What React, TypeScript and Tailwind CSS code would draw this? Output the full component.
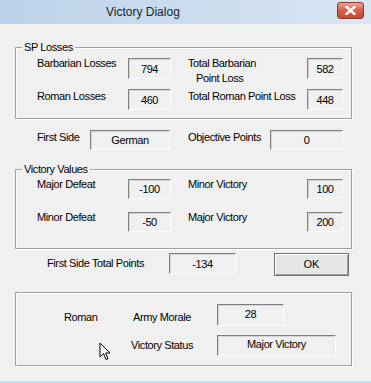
import React from 'react'

// sunken read-only edit field, classic win32 look
function Field({ value, className }: { value: string; className: string }) {
  return (
    <div
      className={`flex items-center justify-center border border-t-[#808080] border-l-[#808080] border-b-[#fcfcfc] border-r-[#fcfcfc] shadow-[inset_1px_1px_0_#d4d4d4] bg-[#f0f0f0] ${className}`}
    >
      <span className="pt-[1px]">{value}</span>
    </div>
  )
}

function Group({ label, className, children }: { label?: string; className: string; children: React.ReactNode }) {
  return (
    <div className={`relative w-[337px] border border-[#a0a0a0] shadow-[inset_1px_1px_0_#fff,1px_1px_0_#fff] ${className}`}>
      {label && (
        <span className="absolute -top-[8px] left-[6px] bg-[#f0f0f0] px-[2px] leading-[14px]">{label}</span>
      )}
      {children}
    </div>
  )
}

function Cursor() {
  return (
    <svg className="absolute left-[99px] top-[342px]" width="13" height="20" viewBox="0 0 13 20">
      <path
        d="M1 1 L1 15 L4.5 11.5 L7 17.5 L9 16.7 L6.6 11 L11 11 Z"
        fill="#fff"
        stroke="#000"
        strokeWidth="1"
        strokeLinejoin="miter"
      />
    </svg>
  )
}

export default function App() {
  return (
    <div className="relative w-[371px] h-[383px] bg-[#f0f0f0] flex flex-col font-['Liberation_Sans',Arial,sans-serif] text-[11px] tracking-[-0.4px] text-black leading-[13px] overflow-hidden">
      {/* title bar */}
      <div className="h-[24px] shrink-0 flex items-center bg-gradient-to-r from-[#bcd2ea] to-[#d9e6f3]">
        <span className="ml-[106px] text-[12px] tracking-normal text-[#1e1e1e] pt-[1px]">Victory Dialog</span>
        <div className="ml-auto mr-[7px] mb-[3px] w-[27px] h-[17px] rounded-[3px] border border-[#8a3a2e] bg-gradient-to-b from-[#e8a595] via-[#d4604a] to-[#c44a34] flex items-center justify-center">
          <svg width="11" height="9" viewBox="0 0 11 9">
            <path d="M1.5 1 L9.5 8 M9.5 1 L1.5 8" stroke="#fff" strokeWidth="2.4" strokeLinecap="square" />
          </svg>
        </div>
      </div>

      <div className="flex-1 pl-[15px] flex flex-col">
        {/* SP Losses */}
        <Group label="SP Losses" className="mt-[23px] h-[72px]">
          <div className="flex pl-[21px] pt-[10px] h-[31px]">
            <span className="w-[91px] mt-[-1px]">Barbarian Losses</span>
            <Field value="794" className="w-[43px] h-[21px]" />
            <div className="ml-[17px] w-[119px] mt-[-2px] flex flex-col leading-[15px]">
              <span>Total Barbarian</span>
              <span className="pl-[8px]">Point Loss</span>
            </div>
            <Field value="582" className="w-[36px] h-[21px]" />
          </div>
          <div className="flex pl-[21px] pt-[10px]">
            <span className="w-[91px] mt-[1px]">Roman Losses</span>
            <Field value="460" className="w-[43px] h-[21px]" />
            <span className="ml-[17px] w-[119px] mt-[1px]">Total Roman Point Loss</span>
            <Field value="448" className="w-[36px] h-[21px]" />
          </div>
        </Group>

        {/* first side row */}
        <div className="flex pl-[22px] mt-[11px] h-[20px]">
          <span className="w-[53px] mt-[1px]">First Side</span>
          <Field value="German" className="w-[80px] h-[20px]" />
          <span className="ml-[18px] w-[82px] mt-[1px]">Objective Points</span>
          <Field value="0" className="w-[73px] h-[20px]" />
        </div>

        {/* Victory Values */}
        <Group label="Victory Values" className="mt-[19px] h-[80px]">
          <div className="flex pl-[21px] pt-[9px]">
            <span className="w-[91px] mt-[-1px]">Major Defeat</span>
            <Field value="-100" className="w-[43px] h-[20px]" />
            <span className="ml-[17px] w-[119px] mt-[-1px]">Minor Victory</span>
            <Field value="100" className="w-[36px] h-[20px]" />
          </div>
          <div className="flex pl-[21px] pt-[13px]">
            <span className="w-[91px] mt-[-1px]">Minor Defeat</span>
            <Field value="-50" className="w-[43px] h-[20px]" />
            <span className="ml-[17px] w-[119px] mt-[-1px]">Major Victory</span>
            <Field value="200" className="w-[36px] h-[20px]" />
          </div>
        </Group>

        {/* totals + OK */}
        <div className="flex mt-[4px] h-[23px]">
          <span className="ml-[32px] w-[122px] mt-[4px]">First Side Total Points</span>
          <Field value="-134" className="w-[67px] h-[21px]" />
          <button className="ml-[38px] w-[75px] h-[23px] border border-[#707070] bg-[#e6e6e6] shadow-[inset_1px_1px_0_#fff,inset_-1px_-1px_0_#a0a0a0] flex items-center justify-center text-[11px] tracking-normal">
            OK
          </button>
        </div>

        {/* morale / status */}
        <Group className="mt-[16px] h-[74px]">
          <div className="flex pt-[11px] h-[33px]">
            <span className="ml-[48px] w-[69px] mt-[7px]">Roman</span>
            <span className="w-[84px] mt-[7px]">Army Morale</span>
            <div className="w-[67px] h-[22px] flex justify-center border border-t-[#808080] border-l-[#808080] border-b-[#fcfcfc] border-r-[#fcfcfc] shadow-[inset_1px_1px_0_#d4d4d4]">
              <span className="mt-[3px]">28</span>
            </div>
          </div>
          <div className="flex pt-[9px]">
            <span className="ml-[115px] w-[86px] mt-[4px]">Victory Status</span>
            <div className="w-[119px] h-[21px] flex justify-center border border-t-[#808080] border-l-[#808080] border-b-[#fcfcfc] border-r-[#fcfcfc] shadow-[inset_1px_1px_0_#d4d4d4]">
              <span className="mt-[2px]">Major Victory</span>
            </div>
          </div>
        </Group>
      </div>

      <div className="h-[2px] shrink-0 bg-[#bfe0ef]" />
      <Cursor />
    </div>
  )
}
